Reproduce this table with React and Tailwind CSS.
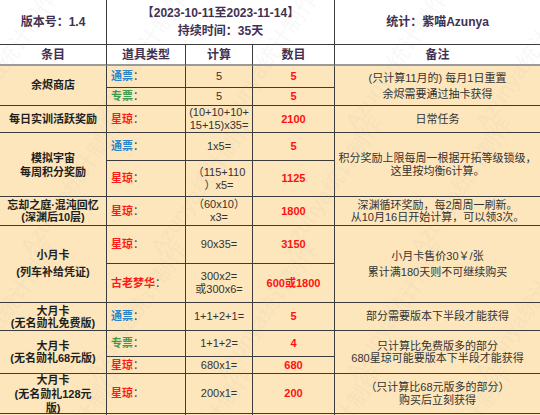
import React from "react";

const B = "border-r border-b border-[#3c3c3c]";
const BODY = "bg-[#fde6bc]";
const HEAD = "bg-white font-bold text-[12px] text-[#3f3151] flex items-center justify-center text-center";

function Name({ children, span, lh = "leading-[13px]" }) {
  return (
    <div className={`${B} ${BODY} ${span} ${lh} flex flex-col items-center justify-center text-center font-bold text-[11px] text-[#1f1f1f]`}>
      {children}
    </div>
  );
}

function Type({ kind }) {
  const color =
    kind === "通票" ? "text-[#2a84cc]" : kind === "专票" ? "text-[#3e9a4e]" : "text-[#ff1a1a]";
  return (
    <div className={`${B} ${BODY} flex items-center pl-[4px] text-[11px] font-bold`}>
      <span className={color}>{kind}</span>
      <span className="text-[#444] font-normal">：</span>
    </div>
  );
}

function Calc({ children }) {
  return (
    <div className={`${B} ${BODY} flex flex-col items-center justify-center text-center text-[11px] leading-[13px] text-[#333]`}>
      {children}
    </div>
  );
}

function Num({ children }) {
  return (
    <div className={`${B} ${BODY} flex items-center justify-center text-[11px] font-bold text-[#ff1010]`}>
      {children}
    </div>
  );
}

function Note({ children, span, lh = "leading-[13px]" }) {
  return (
    <div className={`border-b border-[#3c3c3c] ${BODY} ${span} ${lh} flex flex-col items-center justify-center text-center text-[11px] text-[#333]`}>
      {children}
    </div>
  );
}

export default function App() {
  const marks = [];
  for (let r = 0; r < 4; r++) {
    for (let c = 0; c < 5; c++) {
      marks.push({ top: r * 125 - 10, left: c * 130 - 40 + (r % 2) * 65 });
    }
  }
  return (
    <div className="relative w-[540px] h-[415px] overflow-hidden bg-white font-['Liberation_Sans','Noto_Sans_CJK_SC',sans-serif]">
      <div className="grid grid-cols-[107px_79px_67px_82px_205px] grid-rows-[45px_21px_22px_18px_27px_28px_36px_29px_38px_39px_28px_26px_17px_40px_20px]">
        {/* header 1 */}
        <div className={`${B} ${HEAD}`}>版本号：1.4</div>
        <div className={`${B} ${HEAD} col-span-3 flex-col leading-[18px]`}>
          <div>【2023-10-11至2023-11-14】</div>
          <div>持续时间：35天</div>
        </div>
        <div className={`border-b border-[#3c3c3c] ${HEAD}`}>统计：紫喵Azunya</div>

        {/* header 2 */}
        <div className={`border-r border-[#3c3c3c] border-b-2 border-b-[#9a9a9a] ${HEAD}`}>条目</div>
        <div className={`border-r border-[#3c3c3c] border-b-2 border-b-[#9a9a9a] ${HEAD}`}>道具类型</div>
        <div className={`border-r border-[#3c3c3c] border-b-2 border-b-[#9a9a9a] ${HEAD}`}>计算</div>
        <div className={`border-r border-[#3c3c3c] border-b-2 border-b-[#9a9a9a] ${HEAD}`}>数目</div>
        <div className={`border-b-2 border-b-[#9a9a9a] ${HEAD}`}>备注</div>

        {/* 余烬商店 */}
        <Name span="row-span-2">余烬商店</Name>
        <Type kind="通票" />
        <Calc>5</Calc>
        <Num>5</Num>
        <Note span="row-span-2" lh="leading-[16px]">
          <div>(只计算11月的) 每月1日重置</div>
          <div>余烬需要通过抽卡获得</div>
        </Note>
        <Type kind="专票" />
        <Calc>5</Calc>
        <Num>5</Num>

        {/* 每日实训 */}
        <Name>每日实训活跃奖励</Name>
        <Type kind="星琼" />
        <Calc>
          <div>(10+10+10+</div>
          <div>15+15)x35=</div>
        </Calc>
        <Num>2100</Num>
        <Note>日常任务</Note>

        {/* 模拟宇宙 */}
        <Name span="row-span-2" lh="leading-[14px]">
          <div>模拟宇宙</div>
          <div>每周积分奖励</div>
        </Name>
        <Type kind="通票" />
        <Calc>1x5=</Calc>
        <Num>5</Num>
        <Note span="row-span-2">
          <div>积分奖励上限每周一根据开拓等级锁级，</div>
          <div>这里按均衡6计算。</div>
        </Note>
        <Type kind="星琼" />
        <Calc>
          <div>（115+110</div>
          <div>）x5=</div>
        </Calc>
        <Num>1125</Num>

        {/* 忘却之庭 */}
        <Name lh="leading-[12px]">
          <div>忘却之庭·混沌回忆</div>
          <div>(深渊后10层)</div>
        </Name>
        <Type kind="星琼" />
        <Calc>
          <div>（60x10）</div>
          <div>x3=</div>
        </Calc>
        <Num>1800</Num>
        <Note lh="leading-[12px]">
          <div>深渊循环奖励，每2周周一刷新。</div>
          <div>从10月16日开始计算，可以领3次。</div>
        </Note>

        {/* 小月卡 */}
        <Name span="row-span-2" lh="leading-[17px]">
          <div>小月卡</div>
          <div>(列车补给凭证)</div>
        </Name>
        <Type kind="星琼" />
        <Calc>90x35=</Calc>
        <Num>3150</Num>
        <Note span="row-span-2" lh="leading-[16px]">
          <div>小月卡售价30￥/张</div>
          <div>累计满180天则不可继续购买</div>
        </Note>
        <Type kind="古老梦华" />
        <Calc>
          <div>300x2=</div>
          <div>或300x6=</div>
        </Calc>
        <Num>600或1800</Num>

        {/* 大月卡 免费 */}
        <Name lh="leading-[12px]">
          <div>大月卡</div>
          <div>(无名勋礼免费版)</div>
        </Name>
        <Type kind="通票" />
        <Calc>1+1+2+1=</Calc>
        <Num>5</Num>
        <Note>部分需要版本下半段才能获得</Note>

        {/* 大月卡 68 */}
        <Name span="row-span-2" lh="leading-[12px]">
          <div>大月卡</div>
          <div>(无名勋礼68元版)</div>
        </Name>
        <Type kind="专票" />
        <Calc>1+1+2=</Calc>
        <Num>4</Num>
        <Note span="row-span-2" lh="leading-[12px]">
          <div>只计算比免费版多的部分</div>
          <div>680星琼可能要版本下半段才能获得</div>
        </Note>
        <Type kind="星琼" />
        <Calc>680x1=</Calc>
        <Num>680</Num>

        {/* 大月卡 128 */}
        <Name lh="leading-[14px]">
          <div>大月卡</div>
          <div>(无名勋礼128元</div>
          <div>版)</div>
        </Name>
        <Type kind="星琼" />
        <Calc>200x1=</Calc>
        <Num>200</Num>
        <Note lh="leading-[13px]">
          <div>（只计算比68元版多的部分）</div>
          <div>购买后立刻获得</div>
        </Note>

        <div className={`${B} ${BODY}`} />
        <div className={`${B} ${BODY}`} />
        <div className={`${B} ${BODY}`} />
        <div className={`${B} ${BODY}`} />
        <div className={`${BODY}`} />
      </div>

      {/* watermark */}
      <div className="absolute inset-0 pointer-events-none overflow-hidden">
        {marks.map((m, i) => (
          <div
            key={i}
            className="absolute whitespace-nowrap text-[22px] text-[#9a9a9a] opacity-[0.06] -rotate-[55deg] origin-left"
            style={{ top: m.top + 120, left: m.left }}
          >
            Azunya统计制作
          </div>
        ))}
      </div>
    </div>
  );
}
